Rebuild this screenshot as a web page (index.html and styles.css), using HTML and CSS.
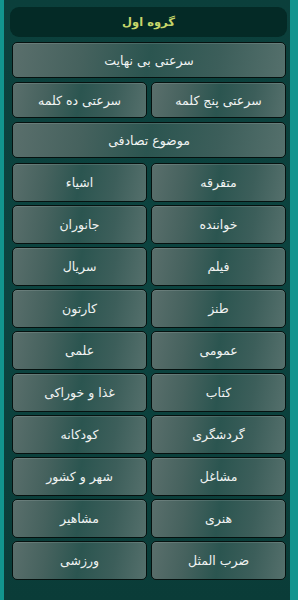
FILE: index.html
```html
<!DOCTYPE html>
<html lang="fa" dir="rtl">
<head>
<meta charset="utf-8">
<link rel="stylesheet" href="styles.css">
</head>
<body>
<div class="app">
  <div class="header">گروه اول</div>
  <div class="top">
    <div class="btn wide">سرعتی بی نهایت</div>
    <div class="pair">
      <div class="btn">سرعتی پنج کلمه</div>
      <div class="btn">سرعتی ده کلمه</div>
    </div>
    <div class="btn wide">موضوع تصادفی</div>
  </div>
  <div class="grid">
    <div class="btn">متفرقه</div>
    <div class="btn">اشیاء</div>
    <div class="btn">خواننده</div>
    <div class="btn">جانوران</div>
    <div class="btn">فیلم</div>
    <div class="btn">سریال</div>
    <div class="btn">طنز</div>
    <div class="btn">کارتون</div>
    <div class="btn">عمومی</div>
    <div class="btn">علمی</div>
    <div class="btn">کتاب</div>
    <div class="btn">غذا و خوراکی</div>
    <div class="btn">گردشگری</div>
    <div class="btn">کودکانه</div>
    <div class="btn">مشاغل</div>
    <div class="btn">شهر و کشور</div>
    <div class="btn">هنری</div>
    <div class="btn">مشاهیر</div>
    <div class="btn">ضرب المثل</div>
    <div class="btn">ورزشی</div>
  </div>
</div>
</body>
</html>
```
FILE: styles.css
```css
html, body {
  margin: 0;
  padding: 0;
  height: 100%;
}
body {
  background: #12958e;
  font-family: "DejaVu Sans", "Noto Sans", sans-serif;
}
.app {
  height: 600px;
  box-sizing: border-box;
  margin: 0 8px 0 4px;
  background: linear-gradient(180deg, #0b3f3b 0%, #0c4440 50%, #0a3c38 100%);
  padding: 7px 4px 0 8px;
  display: flex;
  flex-direction: column;
}
.header {
  height: 30px;
  margin: 0 -1px 5px -2px;
  background: #042a26;
  border-radius: 9px;
  color: #c6d66a;
  font-weight: bold;
  font-size: 11.5px;
  display: flex;
  align-items: center;
  justify-content: center;
}
.top {
  display: flex;
  flex-direction: column;
  gap: 4px;
}
.pair {
  display: grid;
  grid-template-columns: 1fr 1fr;
  gap: 4px;
}
.grid {
  margin-top: 5px;
  display: grid;
  grid-template-columns: 1fr 1fr;
  grid-auto-rows: 39px;
  gap: 3px 4px;
}
.btn {
  height: 36px;
  box-sizing: border-box;
  border: 1.5px solid #06110f;
  border-radius: 5px;
  background: linear-gradient(100deg, #5a6f6c 0%, #46625e 25%, #2b5550 50%, #3c5e5a 75%, #55706c 100%);
  box-shadow: inset 0 1px 0 rgba(255,255,255,0.12);
  color: #f0f3f2;
  font-size: 12.5px;
  display: flex;
  align-items: center;
  justify-content: center;
}
.grid .btn {
  height: 39px;
}
```
